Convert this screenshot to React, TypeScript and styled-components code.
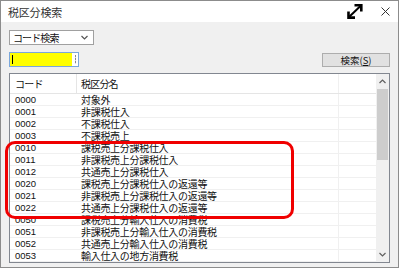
import React from "react";
import styled, { createGlobalStyle } from "styled-components";

const GlobalStyle = createGlobalStyle`
  html, body {
    margin: 0;
    padding: 0;
    background: #f0f0f0;
  }
  * {
    box-sizing: border-box;
  }
`;

const JP = `"Noto Sans CJK JP", "Noto Sans", sans-serif`;
const NUM = `"Liberation Sans Narrow", "Liberation Sans", sans-serif`;

interface IRow {
  code: string;
  name: string;
}

const rows: IRow[] = [
  { code: "0000", name: "対象外" },
  { code: "0001", name: "非課税仕入" },
  { code: "0002", name: "不課税仕入" },
  { code: "0003", name: "不課税売上" },
  { code: "0010", name: "課税売上分課税仕入" },
  { code: "0011", name: "非課税売上分課税仕入" },
  { code: "0012", name: "共通売上分課税仕入" },
  { code: "0020", name: "課税売上分課税仕入の返還等" },
  { code: "0021", name: "非課税売上分課税仕入の返還等" },
  { code: "0022", name: "共通売上分課税仕入の返還等" },
  { code: "0050", name: "課税売上分輸入仕入の消費税" },
  { code: "0051", name: "非課税売上分輸入仕入の消費税" },
  { code: "0052", name: "共通売上分輸入仕入の消費税" },
  { code: "0053", name: "輸入仕入の地方消費税" },
];

const Window = styled.div`
  position: relative;
  width: 399px;
  height: 268px;
  border: 1px solid #8c8c8c;
  background: #f0f0f0;
  display: flex;
  flex-direction: column;
  overflow: hidden;
  font-family: ${JP};
`;

const TitleBar = styled.div`
  height: 23px;
  background: #ffffff;
  display: flex;
  align-items: center;
  padding: 0 8px 0 7px;
`;

const Title = styled.span`
  flex: 1;
  font-size: 11px;
  letter-spacing: -0.2px;
  color: #333333;
`;

const TitleIcon = styled.span`
  display: flex;
  align-items: center;
  margin-left: ${(p: { gap?: number }) => p.gap ?? 0}px;
`;

const Body = styled.div`
  flex: 1;
  display: flex;
  flex-direction: column;
  padding: 8px 8px 4px 8px;
`;

const Combo = styled.div`
  width: 85px;
  height: 15px;
  background: #ffffff;
  border: 1px solid #a0a0a0;
  display: flex;
  align-items: center;
  justify-content: space-between;
  padding: 0 5px 0 3px;
  font-size: 10px;
  letter-spacing: -0.9px;
  color: #111;
`;

const InputRow = styled.div`
  margin-top: 7px;
  height: 15px;
  display: flex;
  align-items: flex-end;
  justify-content: space-between;
`;

const CodeInput = styled.div`
  width: 70px;
  height: 15px;
  border: 1px solid #7aa7dc;
  background: #ffffff;
  display: flex;
  align-items: stretch;
`;

const YellowField = styled.div`
  width: 62px;
  background: #ffff00;
  position: relative;
`;

const Caret = styled.span`
  position: absolute;
  left: 2px;
  top: 2px;
  width: 1px;
  height: 9px;
  background: #000;
`;

const ImeMark = styled.div`
  flex: 1;
  display: flex;
  justify-content: center;
  align-items: center;
  &::after {
    content: "";
    width: 1px;
    height: 9px;
    background: repeating-linear-gradient(#888 0 2px, #ddd 2px 3px);
  }
`;

const SearchButton = styled.div`
  width: 68px;
  height: 14px;
  background: #e1e1e1;
  border: 1px solid #adadad;
  display: flex;
  align-items: center;
  justify-content: center;
  font-size: 9.5px;
  color: #111;
  u {
    text-decoration: underline;
  }
`;

const ListBox = styled.div`
  margin-top: 6px;
  flex: 1;
  border: 1px solid #828790;
  background: #ffffff;
  display: flex;
  overflow: hidden;
`;

const Table = styled.div`
  flex: 1;
  display: flex;
  flex-direction: column;
`;

const HeaderRow = styled.div`
  height: 20px;
  flex-shrink: 0;
  display: grid;
  grid-template-columns: 67px 262px 1fr;
  border-bottom: 1px solid #e5e5e5;
  font-size: 10px;
  letter-spacing: -0.8px;
  color: #111;
`;

const HeadCell = styled.div<{ sep?: boolean }>`
  display: flex;
  align-items: center;
  padding-left: ${(p) => (p.sep ? 5 : 4)}px;
  border-right: 1px solid ${(p) => (p.sep ? "#e5e5e5" : "#f0f0f0")};
`;

const Row = styled.div`
  height: 12px;
  flex-shrink: 0;
  display: grid;
  grid-template-columns: 67px 262px 1fr;
  border-bottom: 1px solid #f0f0f0;
  color: #111;
`;

const CodeCell = styled.div`
  font-family: ${NUM};
  font-size: 9.5px;
  line-height: 11px;
  padding-left: 5px;
`;

const NameCell = styled.div`
  font-size: 10px;
  letter-spacing: -0.3px;
  line-height: 11px;
  padding-left: 4px;
  border-right: 1px solid #f0f0f0;
  white-space: nowrap;
`;

const ScrollBar = styled.div`
  width: 13px;
  background: #f0f0f0;
  display: flex;
  flex-direction: column;
`;

const ScrollArrow = styled.div`
  height: 15px;
  display: flex;
  align-items: center;
  justify-content: center;
`;

const Track = styled.div`
  flex: 1;
  padding: 0 1px;
`;

const Thumb = styled.div`
  height: 71px;
  background: #cdcdcd;
`;

const Highlight = styled.div`
  position: absolute;
  left: 4px;
  top: 140px;
  width: 289px;
  height: 78px;
  border: 3px solid #f00000;
  border-radius: 10px;
  pointer-events: none;
`;

const Chevron = ({ up, color = "#555" }: { up?: boolean; color?: string }) => (
  <svg width="7" height="5" viewBox="0 0 7 5">
    <polyline
      points={up ? "0.5,4 3.5,1 6.5,4" : "0.5,1 3.5,4 6.5,1"}
      fill="none"
      stroke={color}
      strokeWidth="1.2"
    />
  </svg>
);

const ExpandIcon = () => (
  <svg width="18" height="17" viewBox="0 0 18 17">
    <line x1="3" y1="14" x2="15" y2="2.5" stroke="#000" strokeWidth="2" />
    <polyline points="8.5,2.2 15.3,2.2 15.3,8.5" fill="none" stroke="#000" strokeWidth="2.6" />
    <polyline points="2.5,8.5 2.5,14.6 9,14.6" fill="none" stroke="#000" strokeWidth="2.6" />
  </svg>
);

const CloseIcon = () => (
  <svg width="9" height="9" viewBox="0 0 9 9">
    <line x1="0.5" y1="0.5" x2="8.5" y2="8.5" stroke="#333" strokeWidth="1" />
    <line x1="8.5" y1="0.5" x2="0.5" y2="8.5" stroke="#333" strokeWidth="1" />
  </svg>
);

const App = () => (
  <>
    <GlobalStyle />
    <Window>
      <TitleBar>
        <Title>税区分検索</Title>
        <TitleIcon>
          <ExpandIcon />
        </TitleIcon>
        <TitleIcon gap={17}>
          <CloseIcon />
        </TitleIcon>
      </TitleBar>
      <Body>
        <Combo>
          <span>コード検索</span>
          <Chevron />
        </Combo>
        <InputRow>
          <CodeInput>
            <YellowField>
              <Caret />
            </YellowField>
            <ImeMark />
          </CodeInput>
          <SearchButton>
            検索(<u>S</u>)
          </SearchButton>
        </InputRow>
        <ListBox>
          <Table>
            <HeaderRow>
              <HeadCell sep>コード</HeadCell>
              <HeadCell>税区分名</HeadCell>
              <div />
            </HeaderRow>
            {rows.map((r) => (
              <Row key={r.code}>
                <CodeCell>{r.code}</CodeCell>
                <NameCell>{r.name}</NameCell>
                <div />
              </Row>
            ))}
          </Table>
          <ScrollBar>
            <ScrollArrow>
              <Chevron up color="#606060" />
            </ScrollArrow>
            <Track>
              <Thumb />
            </Track>
            <ScrollArrow>
              <Chevron color="#606060" />
            </ScrollArrow>
          </ScrollBar>
        </ListBox>
      </Body>
      <Highlight />
    </Window>
  </>
);

export default App;
